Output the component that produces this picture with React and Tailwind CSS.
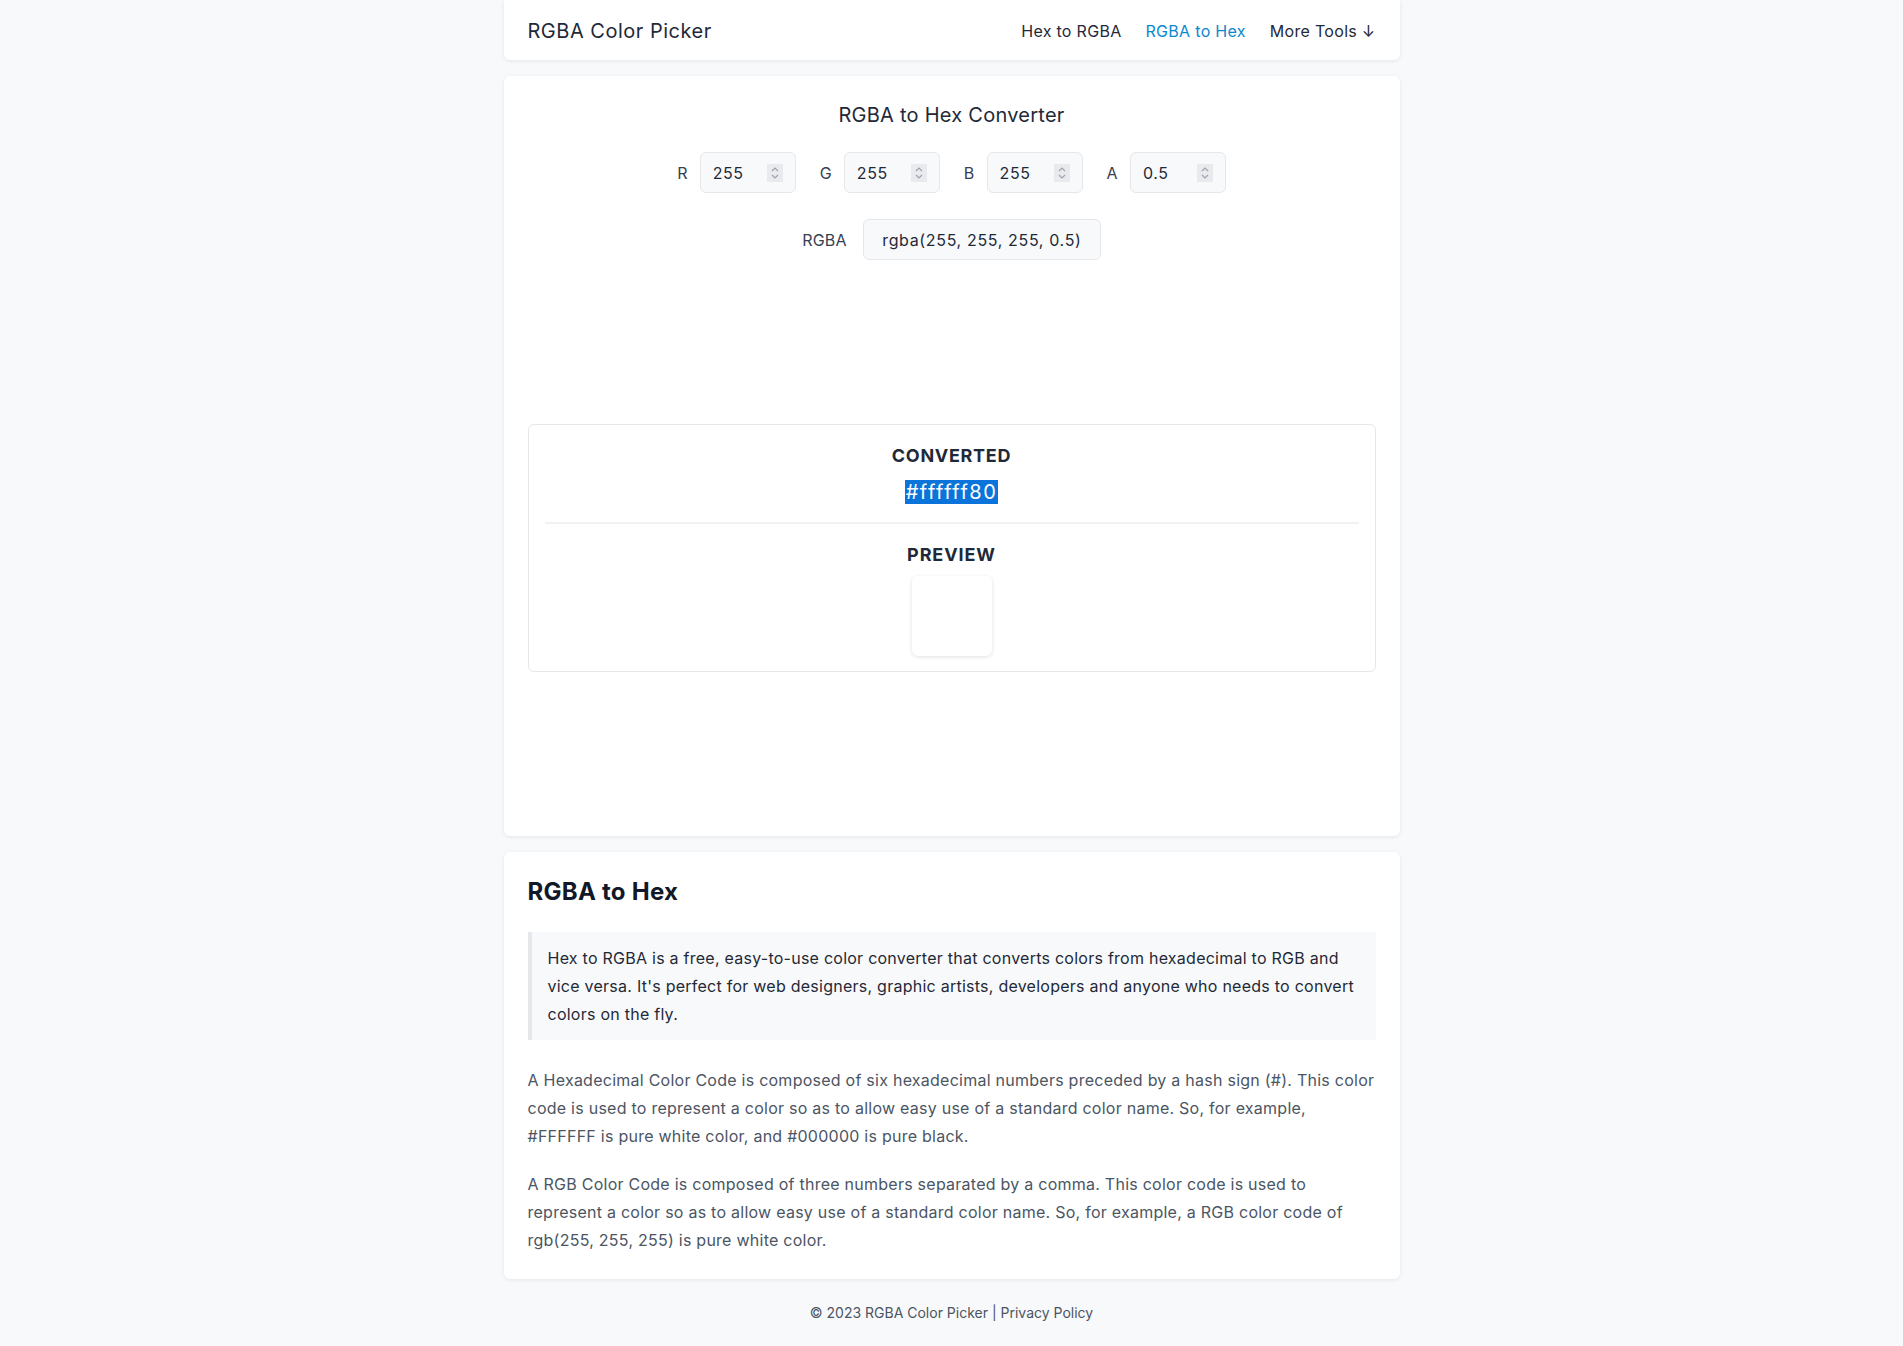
import React from 'react';

const font = { fontFamily: 'Inter, "Noto Sans", sans-serif' };

// little up/down spinner drawn next to the number fields
const Spinner = () => (
  <div className="w-4 h-[18px] bg-[#e9eaee] flex items-center justify-center">
    <svg width="10" height="14" viewBox="0 0 10 14" fill="none" stroke="#9ca3af" strokeWidth="1.2">
      <path d="M2 5 L5 2 L8 5" />
      <path d="M2 9 L5 12 L8 9" />
    </svg>
  </div>
);

const NumberField = ({ label, value }) => (
  <div className="flex items-center">
    <span className="mr-3 text-[#374151] text-base">{label}</span>
    <div className="w-24 h-[41px] flex items-center justify-between pl-3 pr-3 bg-[#f8f9fb] border border-[#e5e7eb] rounded-md">
      <span className="text-base text-[#1f2937] tracking-[0.6px]">{value}</span>
      <Spinner />
    </div>
  </div>
);

export default function App() {
  return (
    <div className="min-h-[1346px] bg-[#f8f9fa] text-[#1f2937] tracking-[0.25px]" style={font}>
      <div className="max-w-4xl mx-auto pb-6">
        {/* header */}
        <header className="h-[60px] bg-white rounded-b-md shadow-[0_1px_4px_rgba(0,0,0,0.08)] px-6 flex items-center justify-between">
          <div className="text-xl tracking-[0.5px] text-[#1f2937] pt-px">RGBA Color Picker</div>
          <nav className="flex items-center gap-6 text-base tracking-[0.3px] pt-px">
            <a className="text-[#1f2937]">Hex to RGBA</a>
            <a className="text-[#0a88d0]">RGBA to Hex</a>
            <a className="text-[#1f2937]">More Tools ↓</a>
          </nav>
        </header>

        {/* converter card */}
        <section className="mt-4 bg-white rounded-md shadow-[0_1px_4px_rgba(0,0,0,0.08)] p-6">
          <h1 className="text-xl text-center text-[#1f2937] tracking-[0.25px] pt-px">RGBA to Hex Converter</h1>

          <div className="mt-[23px] flex justify-center gap-6">
            <NumberField label="R" value="255" />
            <NumberField label="G" value="255" />
            <NumberField label="B" value="255" />
            <NumberField label="A" value="0.5" />
          </div>

          <div className="mt-[26px] flex justify-center items-center">
            <span className="mr-4 text-base text-[#374151]">RGBA</span>
            <div className="w-[238px] h-[41px] flex items-center justify-center bg-[#f8f9fb] border border-[#e5e7eb] rounded-md text-base text-[#1f2937] tracking-[0.65px]">
              rgba(255, 255, 255, 0.5)
            </div>
          </div>

          <div className="mt-[164px] border border-[#e5e7eb] rounded-md px-4 pt-4 pb-[15px] text-center">
            <div className="text-lg font-bold tracking-[0.7px] uppercase text-[#1f2937] pt-px">Converted</div>
            <div className="mt-2 text-xl leading-7">
              <span className="bg-[#0a74da] text-white tracking-[1.5px] px-px">#ffffff80</span>
            </div>
            <div className="my-4 border-t-2 border-[#f0f1f3]" />
            <div className="text-lg font-bold tracking-[0.9px] uppercase text-[#1f2937] pt-px">Preview</div>
            <div className="mt-[7px] flex justify-center">
              <div className="w-20 h-20 rounded-md bg-white shadow-[0_1px_4px_rgba(0,0,0,0.12)]" />
            </div>
          </div>

          <div className="h-[140px]" />
        </section>

        {/* article card */}
        <section className="mt-4 bg-white rounded-md shadow-[0_1px_4px_rgba(0,0,0,0.08)] px-6 pt-6 pb-[25px]">
          <h2 className="text-2xl font-bold text-[#111827]">RGBA to Hex</h2>
          <blockquote className="mt-6 border-l-4 border-[#e5e7eb] bg-[#f8f9fa] px-4 py-3 text-base leading-7 text-[#1f2937]">
            Hex to RGBA is a free, easy-to-use color converter that converts colors from hexadecimal to RGB and vice versa. It's perfect for web designers, graphic artists, developers and anyone who needs to convert colors on the fly.
          </blockquote>
          <p className="mt-[26px] text-base leading-7 text-[#4b5563]">
            A Hexadecimal Color Code is composed of six hexadecimal numbers preceded by a hash sign (#). This color code is used to represent a color so as to allow easy use of a standard color name. So, for example, #FFFFFF is pure white color, and #000000 is pure black.
          </p>
          <p className="mt-5 text-base leading-7 text-[#4b5563]">
            A RGB Color Code is composed of three numbers separated by a comma. This color code is used to represent a color so as to allow easy use of a standard color name. So, for example, a RGB color code of rgb(255, 255, 255) is pure white color.
          </p>
        </section>

        <footer className="mt-6 text-center text-sm text-[#4b5563] tracking-normal">
          © 2023 RGBA Color Picker | Privacy Policy
        </footer>
      </div>
    </div>
  );
}
